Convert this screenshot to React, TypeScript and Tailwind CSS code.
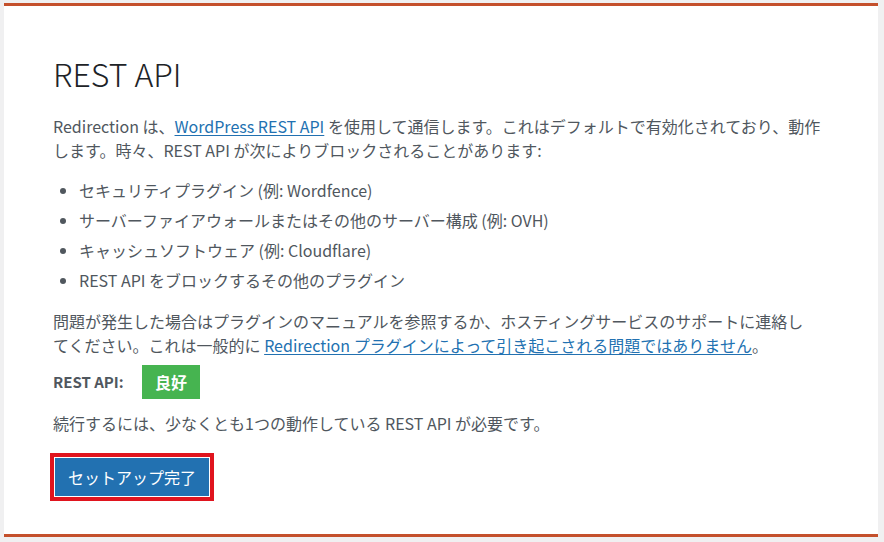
const bullets = [
  "セキュリティプラグイン (例: Wordfence)",
  "サーバーファイアウォールまたはその他のサーバー構成 (例: OVH)",
  "キャッシュソフトウェア (例: Cloudflare)",
  "REST API をブロックするその他のプラグイン",
];

export default function App() {
  return (
    <div
      className="min-h-screen bg-[#f0f0f1] pt-[3px] pl-[4px] pr-[6px] text-[#50575e]"
      style={{ fontFamily: '"Noto Sans CJK JP", "Noto Sans", sans-serif' }}
    >
      <div className="border-y-[3px] border-[#c4502c] bg-white pl-[49px] pr-[54px] pt-[43px] pb-[33px]">
        <h1 className="text-[32px] font-light leading-[48px] text-[#1d2327]">
          REST API
        </h1>

        <p className="mt-[17px] text-[16px] leading-[24px]">
          Redirection は、
          <a href="#" className="text-[#2271b1] underline underline-offset-2">
            WordPress REST API
          </a>{" "}
          を使用して通信します。これはデフォルトで有効化されており、動作します。時々、REST API が次によりブロックされることがあります:
        </p>

        <ul className="mt-[16px] list-disc pl-[26px] text-[16px] leading-[24px]">
          {bullets.map((item) => (
            <li key={item} className="mb-[6px]">
              {item}
            </li>
          ))}
        </ul>

        <p className="mt-[17px] text-[16px] leading-[24px]">
          問題が発生した場合はプラグインのマニュアルを参照するか、ホスティングサービスのサポートに連絡し
          <br />
          てください。これは一般的に{" "}
          <a href="#" className="text-[#2271b1] underline underline-offset-2">
            Redirection プラグインによって引き起こされる問題ではありません
          </a>
          。
        </p>

        <div className="mt-[8px] flex items-center">
          <span className="w-[89px] text-[15px] font-semibold">REST API:</span>
          <span className="flex h-[34px] w-[58px] items-center justify-center bg-[#46b450] text-[16px] font-bold text-white">
            良好
          </span>
        </div>

        <p className="mt-[12px] text-[16px] leading-[24px]">
          続行するには、少なくとも1つの動作している REST API が必要です。
        </p>

        <div className="mt-[18px] ml-[-3px] inline-block border-[4px] border-[#e0141e]">
          <button className="h-[40px] w-[156px] border border-white bg-[#2271b1] text-[16px] text-white">
            セットアップ完了
          </button>
        </div>
      </div>
    </div>
  );
}
